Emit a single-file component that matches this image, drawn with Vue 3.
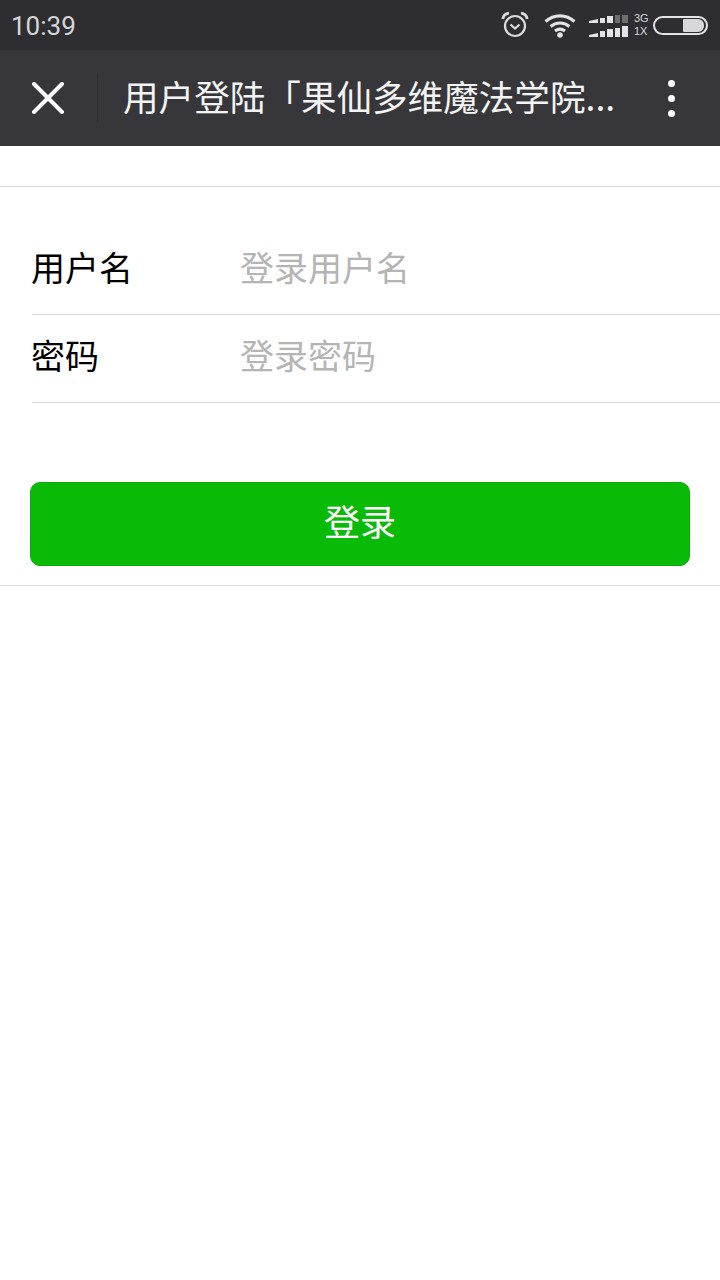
<script setup>
const rows = [
  { label: '用户名', placeholder: '登录用户名' },
  { label: '密码', placeholder: '登录密码' }
]
</script>

<template>
  <div class="page">
    <div class="status">
      <span class="time">10:39</span>
      <div class="status-icons">
        <svg class="alarm" width="28" height="28" viewBox="0 0 28 28" fill="none" stroke="#dcdcde">
          <circle cx="14" cy="15" r="10" stroke-width="2.2" />
          <path d="M9.500 13.500l4.500 4 4.500-4" stroke-width="2.200" />
          <path d="M1.800 8C2.400 4.600 4.600 2.600 8 2.200M26.200 8C25.600 4.600 23.400 2.600 20 2.200" stroke-width="2.800" />
        </svg>
        <svg class="wifi" width="32" height="26" viewBox="0 0 32 26" fill="none" stroke="#e4e4e6" stroke-width="3.200">
          <path d="M1.500 9.500C10 2 22 2 30.500 9.500" />
          <path d="M6.500 14.500C12 9.800 20 9.800 25.500 14.500" />
          <path d="M11 19C14 16.700 18 16.700 21 19" />
          <circle cx="16" cy="23" r="2.800" fill="#e4e4e6" stroke="none" />
        </svg>
        <svg class="signal" width="40" height="26" viewBox="0 0 40 26" fill="#e4e4e6">
          <path d="M0 11V9l9-2v4zM11 11V6h5v5zM18 11V4h6v7z" />
          <path d="M26 11V3h5v8zM33 11V3h6v8z" opacity=".35" />
          <path d="M0 25v-2l9-2v4zM11 25v-6h5v6zM18 25v-8h6v8zM26 25V16h5v9zM33 25V14h6v11z" />
        </svg>
        <div class="net"><span>3G</span><span>1X</span></div>
        <div class="battery"><i></i></div>
      </div>
    </div>

    <header class="nav">
      <svg class="close" width="32" height="32" viewBox="0 0 32 32" stroke="#fff" stroke-width="4" stroke-linecap="round">
        <path d="M2 2l28 28M30 2L2 30" />
      </svg>
      <span class="divider"></span>
      <h1 class="title">用户登陆「果仙多维魔法学院...</h1>
      <div class="more"><i></i><i></i><i></i></div>
    </header>

    <main class="body">
      <div class="form">
        <div v-for="row in rows" :key="row.label" class="row">
          <span class="label">{{ row.label }}</span>
          <span class="placeholder">{{ row.placeholder }}</span>
        </div>
      </div>
      <div class="action">
        <button class="submit" type="button">登录</button>
      </div>
    </main>
  </div>
</template>

<style>
html, body { margin: 0; background: #fff; }
</style>

<style scoped>
.page {
  width: 720px;
  height: 1280px;
  background: #fff;
  font-family: "Noto Sans CJK SC", "Noto Sans", sans-serif;
  overflow: hidden;
}
.status {
  height: 50px;
  box-sizing: border-box;
  background: #2e2e32;
  display: flex;
  align-items: center;
  justify-content: space-between;
  padding: 0 12px;
}
.time {
  font-family: Roboto, sans-serif;
  font-size: 26px;
  color: #d6d6d8;
  line-height: 1;
  margin-top: 2px;
  margin-left: -1px;
}
.status-icons { display: flex; align-items: center; }
.alarm { margin-right: 15px; }
.wifi { margin-right: 13px; }
.signal { margin-right: 5px; }
.net {
  display: flex;
  flex-direction: column;
  font-family: "Liberation Sans", sans-serif;
  font-size: 11px;
  line-height: 13px;
  color: #d8d8da;
  width: 16px;
  margin-right: 3px;
}
.battery {
  width: 47px;
  height: 15px;
  border: 2px solid #e4e4e6;
  border-radius: 10px;
  display: flex;
  justify-content: flex-end;
  align-items: center;
  padding: 0 2px;
}
.battery i {
  display: block;
  width: 21px;
  height: 13px;
  background: #d8d8dc;
  border-radius: 1px 6px 6px 1px;
}
.nav {
  height: 96px;
  box-sizing: border-box;
  background: #37373b;
  display: flex;
  align-items: center;
  padding-left: 32px;
}
.close { flex: none; }
.divider {
  width: 1px;
  height: 48px;
  background: #2f2f33;
  margin-left: 33px;
  margin-right: 25px;
}
.title {
  margin: 0 0 4px;
  flex: 1;
  font-size: 35.6px;
  font-weight: 400;
  color: #f4f4f4;
  white-space: nowrap;
  line-height: 1;
}
.more {
  display: flex;
  flex-direction: column;
  gap: 8px;
  margin-right: 45px;
}
.more i {
  display: block;
  width: 7px;
  height: 7px;
  border-radius: 50%;
  background: #fff;
}
.body {
  padding-top: 40px;
}
.form {
  border-top: 1px solid #dcdcdc;
  padding-top: 40px;
}
.row {
  margin-left: 32px;
  height: 88px;
  box-sizing: border-box;
  display: flex;
  align-items: center;
  padding-bottom: 8px;
  border-bottom: 1px solid #dcdcdc;
  font-size: 34px;
  line-height: 1;
}
.label { width: 209px; margin-left: -1px; color: #000; }
.placeholder { color: #b4b4b4; }
.action {
  margin-top: 79px;
  padding: 0 30px 19px;
  border-bottom: 1px solid #dcdcdc;
}
.submit {
  display: block;
  width: 100%;
  height: 84px;
  border: 1px solid #0aad08;
  border-radius: 10px;
  background: #09bb07;
  color: #fff;
  font-family: inherit;
  font-size: 36px;
  padding: 0 0 8px;
}
</style>
